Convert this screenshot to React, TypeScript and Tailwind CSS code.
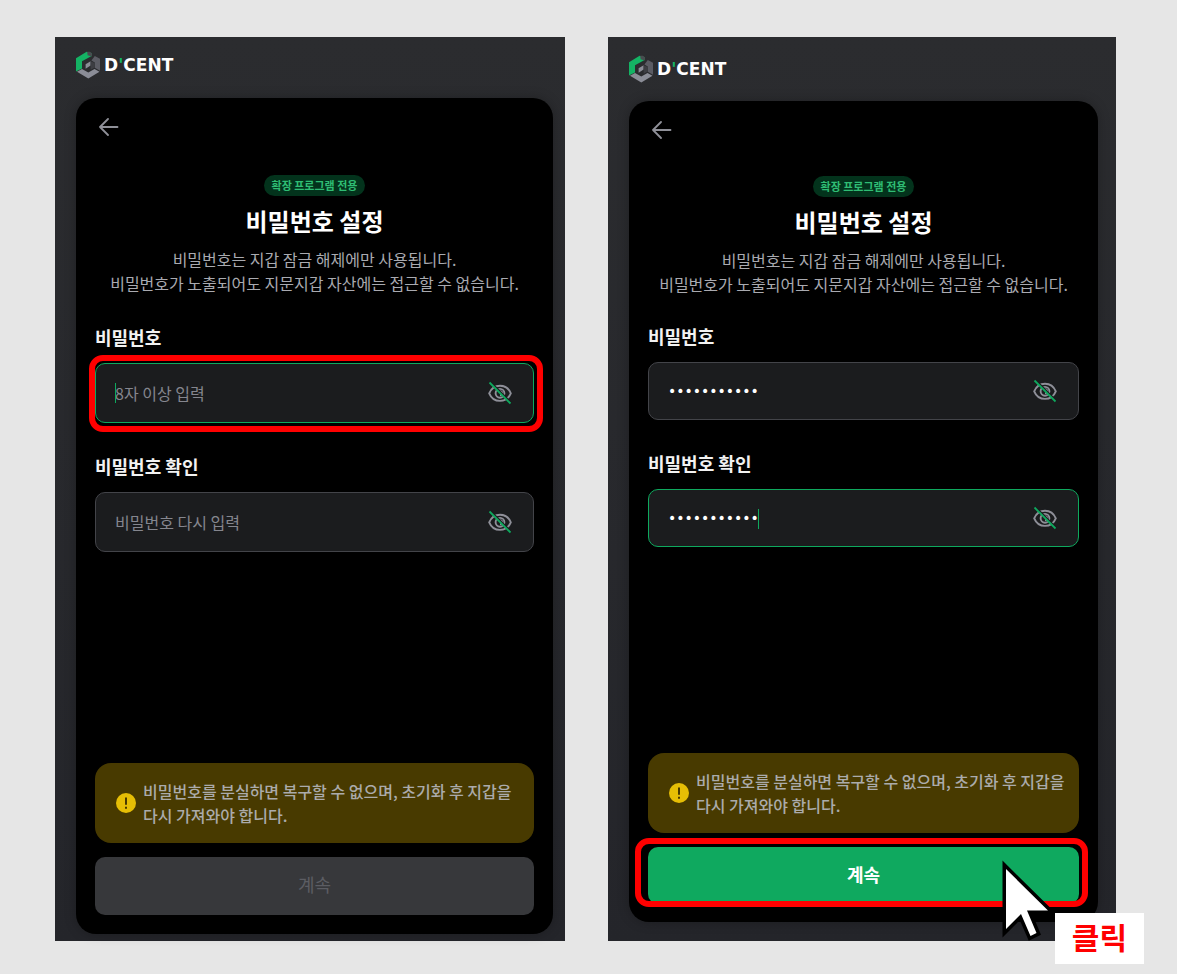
import clsx from "clsx";
import { useId, useState } from "react";

function DcentLogo() {
  return (
    <div className="flex items-center gap-1">
      <svg className="h-7 w-6 shrink-0" viewBox="0 0 24 28" aria-hidden="true">
        <path d="M0 7.2 10.6.8 15.6 2 15.6 5 6 10.2V17.6L0 20.6Z" fill="#14b364" />
        <path d="M11.2.8h2.6l2 1.5v3.2l-4.2-1.2Z" fill="#4a4b50" />
        <path d="M18.8 5 24 7.8v11.9l-5.2-2.9v-5.2l-3.4-2.1Z" fill="#5b5c64" />
        <path d="M1 20.8 6 18l6.3 3.5 6.2-3.5 5 2.8-11.2 6.8Z" fill="#8b8d97" />
        <path d="M9.6 13.2 14.6 10.2v4.2l-5 3.4Z" fill="#8b8d97" />
        <path d="M14.6 10.2 18.8 12v4.4l-4.2 2.4Z" fill="#3d3e43" />
      </svg>
      <span className="font-['DejaVu_Sans',sans-serif] text-[17px] leading-5 font-bold text-white">
        D<span className="text-[#14b364]">'</span>CENT
      </span>
    </div>
  );
}

function EyeOffIcon() {
  return (
    <svg className="size-6" viewBox="0 0 24 24" fill="none" aria-hidden="true">
      <g stroke="#8e8f98" strokeWidth="1.9">
        <path d="M1.2 12.3C3.4 7 7.400 4.700 12 4.700s8.600 2.300 10.800 7.600c-2.200 5.300-6.200 7.600-10.800 7.600S3.400 17.600 1.200 12.300Z" />
        <circle cx="12" cy="12.300" r="4.400" />
        <path d="M12 10.200a2.100 2.100 0 0 1 0 4.200" />
      </g>
      <path d="M2.300 1 23.300 22" stroke="#1b1c1e" strokeWidth="2" />
      <path d="M1.500 1.500 22.500 22.500" stroke="#0ea95e" strokeWidth="1.800" />
    </svg>
  );
}

function HighlightBox({ className }: { className: string }) {
  return (
    <span
      aria-hidden="true"
      className={clsx(
        "pointer-events-none absolute rounded-[14px] border-[6px] border-[#ff0000]",
        className,
      )}
    />
  );
}

interface PasswordFieldProps {
  label: string;
  placeholder: string;
  value: string;
  onChange: (value: string) => void;
  heightClass: string;
  active?: boolean;
  highlighted?: boolean;
}

function PasswordField({
  label,
  placeholder,
  value,
  onChange,
  heightClass,
  active = false,
  highlighted = false,
}: PasswordFieldProps) {
  const id = useId();
  const [visible, setVisible] = useState(false);

  return (
    <div>
      <label htmlFor={id} className="block text-lg leading-6 font-bold text-[#f2f2f2]">
        {label}
      </label>
      <div className="relative mt-3.5">
        <div
          className={clsx(
            "flex items-center rounded-[10px] border bg-[#1b1c1e] pr-[21px] pl-[19px]",
            heightClass,
            active ? "border-[#0ea95e]" : "border-[#434449]",
          )}
        >
          <input
            id={id}
            type={visible ? "text" : "password"}
            value={value}
            placeholder={placeholder}
            onChange={(e) => onChange(e.target.value)}
            className={clsx(
              "min-w-0 flex-1 bg-transparent text-white placeholder-[#85868e] caret-[#0ea95e] outline-none",
              value ? "font-['DejaVu_Sans',sans-serif] text-sm" : "text-base",
            )}
          />
          <button
            type="button"
            aria-label="비밀번호 표시"
            aria-pressed={visible}
            onClick={() => setVisible((prev) => !prev)}
          >
            <EyeOffIcon />
          </button>
        </div>
        {active ? (
          <span
            aria-hidden="true"
            className={clsx(
              "absolute top-5 h-5 w-px bg-[#0ea95e]",
              value ? "left-[110px]" : "left-5",
            )}
          />
        ) : null}
        {highlighted ? <HighlightBox className="-top-2 -right-[9px] -bottom-[9px] -left-1.5" /> : null}
      </div>
    </div>
  );
}

interface SetupScreenProps {
  filled?: boolean;
}

/** One step of the password setup guide: empty form, or filled in and ready to continue. */
function SetupScreen({ filled = false }: SetupScreenProps) {
  const [password, setPassword] = useState(filled ? "dcent-12345" : "");
  const [confirm, setConfirm] = useState(filled ? "dcent-12345" : "");
  const fieldHeight = filled ? "h-[58px]" : "h-[60px]";

  return (
    <section
      className={clsx(
        "relative flex min-w-0 flex-col bg-linear-to-b from-[#2b2c2f] to-[#24252a]",
        filled ? "pt-[18px] pr-[18px] pb-[19px] pl-[21px]" : "pt-3.5 pr-3 pb-[7px] pl-[21px]",
      )}
    >
      <DcentLogo />
      <div
        className={clsx(
          "flex flex-1 flex-col rounded-[20px] bg-black px-[19px] pt-[17px] shadow-[0_0_12px_rgba(0,0,0,0.25)]",
          filled ? "mt-[18px] pb-[18px]" : "mt-[19px] pb-[19px]",
        )}
      >
        <button type="button" aria-label="뒤로" className="ml-1 self-start">
          <svg
            className="size-6"
            viewBox="0 0 24 24"
            fill="none"
            stroke="#8f9098"
            strokeWidth="1.8"
            strokeLinecap="round"
            strokeLinejoin="round"
            aria-hidden="true"
          >
            <path d="M18.500 12H1M9 4 1 12 9 20" />
          </svg>
        </button>

        <div className={clsx("flex flex-col items-center text-center", filled ? "mt-[34px]" : "mt-9")}>
          <span className="rounded-full bg-[#03331c] px-2 text-[11px] leading-[21px] font-bold text-[#2fbd74]">
            확장 프로그램 전용
          </span>
          <h1 className="mt-[7px] text-2xl leading-9 font-bold text-white">비밀번호 설정</h1>
          <p className="mt-2 text-base leading-6 whitespace-nowrap text-[#a9aab0]">
            비밀번호는 지갑 잠금 해제에만 사용됩니다.
            <br />
            비밀번호가 노출되어도 지문지갑 자산에는 접근할 수 없습니다.
          </p>
        </div>

        <div className={clsx("flex flex-col gap-[31px]", filled ? "mt-7" : "mt-[30px]")}>
          <PasswordField
            label="비밀번호"
            placeholder="8자 이상 입력"
            value={password}
            onChange={setPassword}
            heightClass={fieldHeight}
            active={!filled}
            highlighted={!filled}
          />
          <PasswordField
            label="비밀번호 확인"
            placeholder="비밀번호 다시 입력"
            value={confirm}
            onChange={setConfirm}
            heightClass={fieldHeight}
            active={filled}
          />
        </div>

        <div className="mt-auto flex items-center gap-[7px] rounded-2xl bg-[#483a00] py-4 pr-2 pl-[21px]">
          <svg className="size-5 shrink-0" viewBox="0 0 20 20" aria-hidden="true">
            <circle cx="10" cy="10" r="10" fill="#e6be05" />
            <path d="M10 4.500v7.200M10 13.700v2" stroke="#483a00" strokeWidth="2" />
          </svg>
          <p className="min-w-0 flex-1 text-base leading-6 font-medium break-keep text-[#ababab]">
            비밀번호를 분실하면 복구할 수 없으며, 초기화 후 지갑을 다시 가져와야 합니다.
          </p>
        </div>

        <div className="relative mt-3.5">
          <button
            type="button"
            disabled={!filled}
            className={clsx(
              "block w-full rounded-[10px] pb-1 text-lg",
              filled ? "h-[57px] bg-[#0fa95f] font-bold text-white" : "h-[58px] bg-[#37383b] text-[#5c5d63]",
            )}
          >
            계속
          </button>
          {filled ? <HighlightBox className="-top-[9px] -right-[9px] -bottom-[3px] -left-[13px]" /> : null}
        </div>
      </div>

      {filled ? (
        <>
          <svg className="absolute right-[66px] -bottom-px h-[82px] w-12" viewBox="0 0 48 82" aria-hidden="true">
            <path
              d="M4 9 46 50.500H25L34.500 73 28.500 76 19 54 4 69Z"
              fill="#fff"
              stroke="#000"
              strokeWidth="7"
              strokeMiterlimit="10"
              paintOrder="stroke"
            />
          </svg>
          <span className="absolute -right-7 -bottom-[23px] bg-white px-[17px] pb-1 text-3xl leading-[47px] font-bold text-[#ff0000]">
            클릭
          </span>
        </>
      ) : null}
    </section>
  );
}

export default function App() {
  return (
    <main className="grid min-h-screen grid-cols-[510fr_508fr] gap-[43px] bg-[#e6e6e6] pt-[37px] pr-[61px] pb-[33px] pl-[55px] font-['Noto_Sans_CJK_KR',sans-serif]">
      <SetupScreen />
      <SetupScreen filled />
    </main>
  );
}
